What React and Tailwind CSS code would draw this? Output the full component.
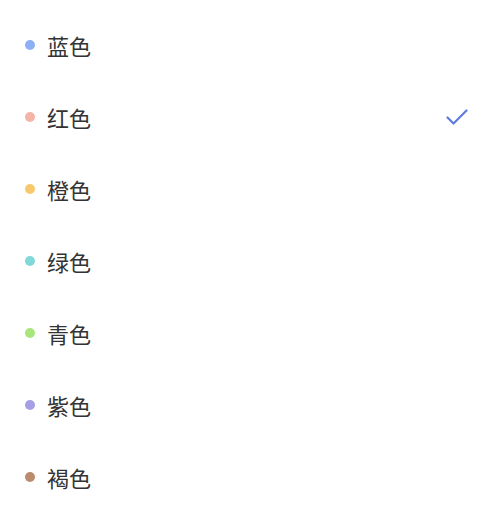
export default function App() {
  const items = [
    { name: "蓝色", color: "bg-[#8db0f5]" },
    { name: "红色", color: "bg-[#f5b4a8]", checked: true },
    { name: "橙色", color: "bg-[#f8c96c]" },
    { name: "绿色", color: "bg-[#80d8d8]" },
    { name: "青色", color: "bg-[#a8e67c]" },
    { name: "紫色", color: "bg-[#a59fe6]" },
    { name: "褐色", color: "bg-[#ba8b6c]" },
  ];
  return (
    <div className="w-[489px] h-[507px] bg-white pt-[9px] font-['Noto_Sans_CJK_SC',sans-serif]">
      {items.map((it) => (
        <div key={it.name} className="h-[72px] flex items-center pl-[25px] pr-[21px]">
          <span className={`w-[10px] h-[10px] rounded-full ${it.color}`} />
          <span className="ml-[12px] text-[22px] leading-none text-[#333333]">{it.name}</span>
          <span className="flex-1" />
          {it.checked && (
            <svg width="22" height="18" viewBox="0 0 22 18" fill="none">
              <path d="M1.5 9.5 L7.5 15.5 L20.5 2.5" stroke="#5b7de0" strokeWidth="2.2" strokeLinecap="round" strokeLinejoin="round" />
            </svg>
          )}
        </div>
      ))}
    </div>
  );
}
